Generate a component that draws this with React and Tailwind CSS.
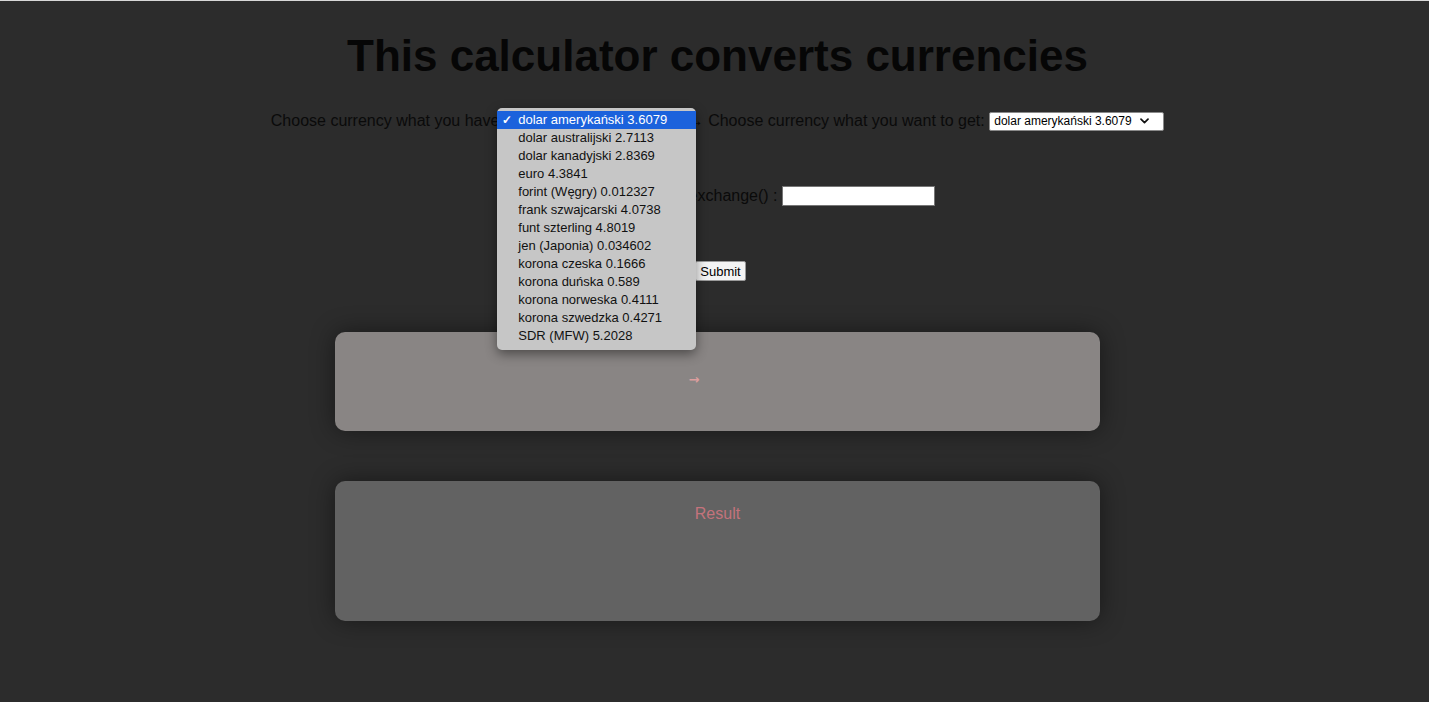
import React from "react";

const currencies = [
  "dolar amerykański 3.6079",
  "dolar australijski 2.7113",
  "dolar kanadyjski 2.8369",
  "euro 4.3841",
  "forint (Węgry) 0.012327",
  "frank szwajcarski 4.0738",
  "funt szterling 4.8019",
  "jen (Japonia) 0.034602",
  "korona czeska 0.1666",
  "korona duńska 0.589",
  "korona norweska 0.4111",
  "korona szwedzka 0.4271",
  "SDR (MFW) 5.2028",
];

function Chevron() {
  return (
    <svg width="9" height="6" viewBox="0 0 9 6" className="shrink-0">
      <path d="M1 1.2 L4.5 4.6 L8 1.2" fill="none" stroke="#111" strokeWidth="1.7" strokeLinecap="round" strokeLinejoin="round" />
    </svg>
  );
}

function FakeSelect({ children }) {
  return (
    <span className="relative inline-flex items-center gap-[8px] w-[175px] h-[19px] bg-white border border-[#8a8a8a] rounded-[2px] pl-[4px] text-[12px] text-black leading-none align-middle">
      <span>{currencies[0]}</span>
      <Chevron />
      {children}
    </span>
  );
}

function Dropdown() {
  return (
    <div className="absolute left-[-12px] top-[-5px] w-[199px] bg-[#c6c6c6] rounded-[5px] shadow-[0_4px_12px_rgba(0,0,0,0.45)] pt-[3px] pb-[5px] z-10">
      {currencies.map((c, i) => (
        <div
          key={c}
          className={`flex items-center h-[18px] text-[13px] leading-none ${i === 0 ? "bg-[#1b62dc] text-white" : "text-[#111]"}`}
        >
          <span className="w-[21px] pl-[5px] text-[12px] font-bold">{i === 0 ? "✓" : ""}</span>
          <span>{c}</span>
        </div>
      ))}
    </div>
  );
}

export default function App() {
  return (
    <div className="min-h-screen bg-[#2c2c2c] border-t border-[#d8d8d8] font-['Liberation_Sans',Arial,sans-serif] text-[#0a0a0a]">
      <div className="flex flex-col items-center pl-[6px]">
        <h1 className="mt-[29px] text-[44px] font-bold leading-[52px] text-[#060606]">
          This calculator converts currencies
        </h1>

        <div className="mt-[29px] flex items-center h-[20px] text-[16px]">
          <span>Choose currency what you have:&nbsp;</span>
          <FakeSelect>
            <Dropdown />
          </FakeSelect>
          <span>&nbsp;→&nbsp;Choose currency what you want to get:&nbsp;</span>
          <FakeSelect />
        </div>

        <div className="mt-[55px] flex items-center h-[20px] text-[16px]">
          <span>Enter amount of money to exchange() :&nbsp;</span>
          <span className="inline-block w-[153px] h-[20px] bg-white border border-[#767676]"></span>
        </div>

        <div className="mt-[55px] flex items-center h-[20px]">
          <button className="ml-[6px] h-[20px] px-[4px] bg-[#f4f4f4] border border-[#9a9a9a] rounded-[2px] text-[13px] text-black leading-none">
            Submit
          </button>
        </div>

        <div className="mt-[51px] w-[765px] h-[99px] rounded-[10px] bg-[#898584] shadow-[0_0_24px_rgba(0,0,0,0.45)] flex items-center justify-center pr-[47px] pb-[4px]">
          <span className="font-['DejaVu_Sans',sans-serif] text-[13px] font-bold text-[#dc9e9e]">→</span>
        </div>

        <div className="mt-[50px] w-[765px] h-[140px] rounded-[10px] bg-[#626262] shadow-[0_0_24px_rgba(0,0,0,0.45)] pt-[21px] text-center">
          <span className="text-[16px] text-[#c4737c]">Result</span>
        </div>
      </div>
    </div>
  );
}
